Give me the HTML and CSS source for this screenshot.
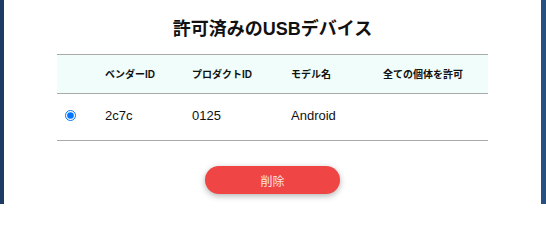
FILE: index.html
```html
<!DOCTYPE html>
<html lang="ja">
<head>
<meta charset="utf-8">
<title>許可済みのUSBデバイス</title>
<link rel="stylesheet" href="styles.css">
</head>
<body>
<div class="frame">
  <div class="edge edge-left"></div>
  <main class="panel">
    <h2 class="title">許可済みのUSBデバイス</h2>
    <table class="devices">
      <colgroup>
        <col class="c-sel"><col class="c-vendor"><col class="c-product"><col class="c-model"><col class="c-all">
      </colgroup>
      <thead>
        <tr>
          <th></th>
          <th>ベンダーID</th>
          <th>プロダクトID</th>
          <th>モデル名</th>
          <th>全ての個体を許可</th>
        </tr>
      </thead>
      <tbody>
        <tr>
          <td><input type="radio" name="dev" class="radio" checked></td>
          <td>2c7c</td>
          <td>0125</td>
          <td>Android</td>
          <td></td>
        </tr>
      </tbody>
    </table>
    <div class="actions">
      <button class="btn-delete" type="button">削除</button>
    </div>
  </main>
  <div class="edge edge-right"></div>
</div>
</body>
</html>
```

FILE: styles.css
```css
html, body {
  margin: 0;
  padding: 0;
  background: #ffffff;
}

body {
  font-family: "Liberation Sans", "Noto Sans CJK JP", sans-serif;
  color: #111111;
}

.frame {
  display: flex;
  width: 546px;
  height: 204px;
  overflow: hidden;
}

.edge {
  flex: none;
  height: 100%;
}

.edge-left {
  width: 4px;
  background: #1d3b63;
}

.edge-right {
  width: 5px;
  background: #26507f;
}

.panel {
  flex: 1;
  background: #ffffff;
  display: flex;
  flex-direction: column;
  align-items: center;
}

.title {
  margin: 15px 0 11px;
  font-size: 18px;
  line-height: 28px;
  font-weight: 700;
  color: #111111;
  font-family: "Liberation Sans", "Noto Sans CJK JP", sans-serif;
}

.devices {
  width: 431px;
  table-layout: fixed;
  border-collapse: collapse;
}

.c-sel { width: 40px; }
.c-vendor { width: 87px; }
.c-product { width: 99px; }
.c-model { width: 92px; }
.c-all { width: 113px; }

.devices thead tr {
  background: #f0fdfa;
  border-top: 1px solid #aaaaaa;
  border-bottom: 1px solid #aaaaaa;
}

.devices th {
  height: 36px;
  padding: 0 0 2px 8px;
  text-align: left;
  font-size: 10px;
  font-weight: 700;
  color: #111111;
}

.devices tbody tr {
  border-bottom: 1px solid #aaaaaa;
}

.devices td {
  height: 43px;
  padding: 0 0 3px 8px;
  font-size: 13px;
  color: #111111;
  vertical-align: middle;
}

.radio {
  display: block;
  margin: 0;
  width: 11px;
  height: 11px;
}

.actions {
  margin-top: 25px;
  display: flex;
  justify-content: center;
}

.btn-delete {
  width: 135px;
  height: 28px;
  border: none;
  border-radius: 14px;
  background: #f04545;
  color: #fde2e4;
  font-size: 12px;
  font-family: "Noto Sans CJK JP", sans-serif;
  box-shadow: 0 2px 6px rgba(0, 0, 0, 0.3);
  padding: 0;
}
```
